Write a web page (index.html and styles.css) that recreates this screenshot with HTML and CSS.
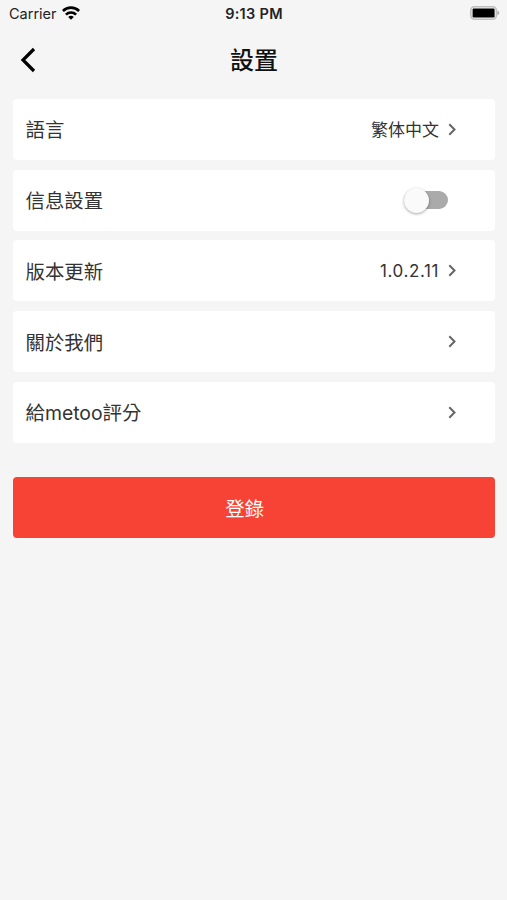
FILE: index.html
```html
<!DOCTYPE html>
<html lang="zh-Hant">
<head>
    <meta charset="UTF-8">
    <title>設置</title>
    <link rel="stylesheet" href="styles.css">
</head>
<body>

<div class="statusbar">
    <div class="carrier">
        <span>Carrier</span>
        <svg class="wifi" width="18" height="14" viewBox="0 0 18 14" fill="none" stroke="#000" stroke-width="2.7">
            <path d="M0.9 5a11.6 11.6 0 0 1 16.2 0"/>
            <path d="M3.9 8.6a7.3 7.3 0 0 1 10.2 0"/>
            <path d="M9 13.8L6.2 11a4 4 0 0 1 5.6 0z" fill="#000" stroke="none"/>
        </svg>
    </div>
    <div class="time">9:13 PM</div>
    <svg class="battery" width="30" height="14" viewBox="0 0 30 14">
        <rect x="0.8" y="0.8" width="25.6" height="12.4" rx="3.6" fill="#f5f5f5" stroke="#c0c0c0" stroke-width="1.6"/>
        <rect x="2.6" y="2.6" width="22" height="8.8" rx="1.2" fill="#000"/>
        <path d="M27.4 4.8c2.4 .6 2.4 3.8 0 4.4z" fill="#aaa"/>
    </svg>
</div>

<div class="header">
    <svg class="back" width="18" height="26" viewBox="0 0 18 26" fill="none" stroke="#000" stroke-width="3.2">
        <path d="M14 2L3 13l11 11"/>
    </svg>
    <h1>設置</h1>
</div>

<div class="list">
    <div class="row">
        <span class="label">語言</span>
        <span class="value">繁体中文</span>
        <svg class="arrow" width="9" height="13" viewBox="0 0 9 13"><path d="M1.3 1.3l5.2 5.2-5.2 5.2"/></svg>
    </div>
    <div class="row">
        <span class="label">信息設置</span>
        <div class="switch"><div class="thumb"></div></div>
    </div>
    <div class="row">
        <span class="label">版本更新</span>
        <span class="value version">1.0.2.11</span>
        <svg class="arrow" width="9" height="13" viewBox="0 0 9 13"><path d="M1.3 1.3l5.2 5.2-5.2 5.2"/></svg>
    </div>
    <div class="row">
        <span class="label">關於我們</span>
        <svg class="arrow" width="9" height="13" viewBox="0 0 9 13"><path d="M1.3 1.3l5.2 5.2-5.2 5.2"/></svg>
    </div>
    <div class="row">
        <span class="label">給metoo評分</span>
        <svg class="arrow" width="9" height="13" viewBox="0 0 9 13"><path d="M1.3 1.3l5.2 5.2-5.2 5.2"/></svg>
    </div>
</div>

<button class="login">登錄</button>

</body>
</html>
```
FILE: styles.css
```css
* { box-sizing: border-box; }
body { margin: 0; min-height: 900px; background: #f5f5f5; color: #333; font-family: Inter, "Noto Sans CJK SC", sans-serif; }
.statusbar { display: grid; grid-template-columns: 1fr auto 1fr; align-items: center; height: 27px; padding: 0 7px 0 9px; color: #222; }
.carrier { display: flex; align-items: center; gap: 5px; font-size: 14.5px; }
.wifi { margin-top: -2px; }
.time { margin-right: 1px; font-size: 14.5px; font-weight: 600; letter-spacing: 0.3px; }
.battery { justify-self: end; margin-top: -1px; }
.header { display: grid; grid-template-columns: 1fr auto 1fr; align-items: center; height: 65px; padding: 0 19px 0 20px; }
h1 { margin: 2px 0 0; color: #111; font-size: 24px; font-weight: 500; line-height: 36px; }
.list { display: flex; flex-direction: column; gap: 9.8px; padding: 6.8px 12.5px 0 13px; }
.row { display: flex; align-items: center; height: 61px; padding: 0 38px 0 12.5px; background: #fff; border-radius: 4px; }
.label { flex: 1; margin-top: -1px; font-size: 19.4px; font-weight: 400; }
.value { margin: -2px 8.5px 0 0; font-size: 17px; }
.version { margin-top: 0; font-size: 17px; letter-spacing: 0.6px; }
.arrow { fill: none; stroke: #666; stroke-width: 2; }
.switch { display: flex; align-items: center; width: 44px; height: 18px; margin-right: 8.5px; border-radius: 9px; background: #aaa; }
.thumb { width: 25px; height: 25px; border-radius: 50%; background: #fafafa; box-shadow: 0 1px 3px rgba(0,0,0,0.35); }
.login { display: block; width: calc(100% - 25.5px); height: 61px; margin: 34.3px 12.5px 0 13px; padding: 0 18px 0 0; border: none; border-radius: 4px; background: #f64335; color: #fff; font-family: inherit; font-size: 19.4px; }
```
